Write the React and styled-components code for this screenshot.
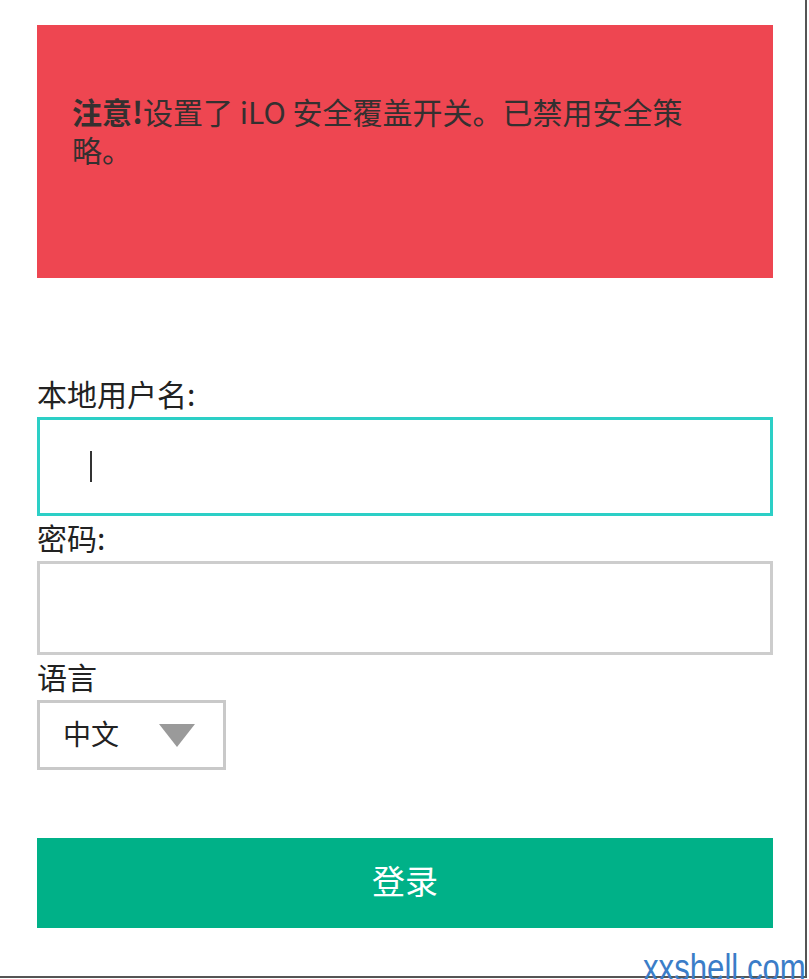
import React from "react";
import styled, { createGlobalStyle } from "styled-components";

const GlobalStyle = createGlobalStyle`
  html, body {
    margin: 0;
    padding: 0;
    background: #ffffff;
    overflow: hidden;
  }
  body {
    font-family: "Noto Sans CJK SC", "Noto Sans", sans-serif;
    color: #222;
  }
`;

const Page = styled.div`
  position: relative;
  width: 809px;
  height: 979px;
  overflow: hidden;
`;

const Frame = styled.div`
  width: 807px;
  height: 978px;
  box-sizing: border-box;
  border-right: 2px solid #555;
  border-bottom: 2px solid #555;
  padding: 25px 0 0 37px;
`;

const Form = styled.div`
  width: 736px;
  display: flex;
  flex-direction: column;
`;

const Alert = styled.div`
  height: 253px;
  box-sizing: border-box;
  background: #ee4651;
  padding: 67px 80px 0 35px;
  font-size: 30px;
  line-height: 38px;
  color: #343030;
`;

const Strong = styled.b`
  font-weight: 700;
`;

const Label = styled.label`
  display: block;
  font-size: 30px;
  line-height: 28px;
  padding-bottom: 10px;
  color: #222;
  margin-top: ${(p) => p.$gap || 7}px;
`;

const Field = styled.div`
  height: ${(p) => p.$h}px;
  box-sizing: border-box;
  border: 3px solid ${(p) => (p.$focus ? "#2ccfc6" : "#cdcdcd")};
  background: #fff;
  display: flex;
  align-items: center;
  padding-left: 50px;
`;

const Caret = styled.span`
  width: 2px;
  height: 31px;
  background: #333;
`;

const Select = styled.div`
  width: 189px;
  height: 70px;
  box-sizing: border-box;
  border: 3px solid #c9c9c9;
  display: flex;
  align-items: center;
  padding-left: 23px;
  gap: 40px;
  font-size: 28px;
  color: #222;
`;

const SelectText = styled.span`
  line-height: 28px;
  padding-bottom: 5px;
`;

const Arrow = styled.span`
  width: 0;
  height: 0;
  border-left: 18px solid transparent;
  border-right: 18px solid transparent;
  border-top: 23px solid #9a9a9a;
`;

const Button = styled.button`
  margin-top: 68px;
  height: 90px;
  border: none;
  background: #00b188;
  color: #fff;
  font-family: "Noto Sans CJK SC", sans-serif;
  font-size: 33px;
  line-height: 33px;
  padding: 0 0 6px;
  cursor: pointer;
`;

const Watermark = styled.div`
  position: absolute;
  left: 643px;
  bottom: -8px;
  font-family: "Liberation Sans", Arial, sans-serif;
  font-size: 38px;
  line-height: 1;
  color: #3b7dc8;
  white-space: nowrap;
  transform: scaleX(0.82);
  transform-origin: left bottom;
`;

export default function App() {
  return (
    <Page>
      <GlobalStyle />
      <Frame>
        <Form>
          <Alert>
            <Strong>注意!</Strong>设置了 iLO 安全覆盖开关。已禁用安全策略。
          </Alert>

          <Label $gap={101}>本地用户名:</Label>
          <Field $h={99} $focus>
            <Caret />
          </Field>

          <Label>密码:</Label>
          <Field $h={94} />

          <Label>语言</Label>
          <Select>
            <SelectText>中文</SelectText>
            <Arrow />
          </Select>

          <Button>登录</Button>
        </Form>
      </Frame>
      <Watermark>xxshell.com</Watermark>
    </Page>
  );
}
